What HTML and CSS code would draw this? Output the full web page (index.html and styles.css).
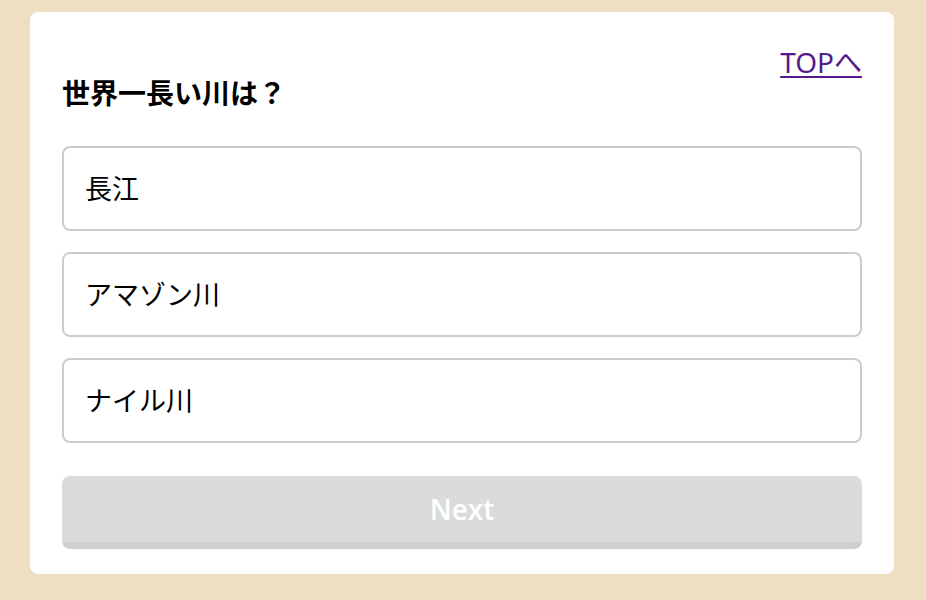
FILE: index.html
```html
<!DOCTYPE html>
<html lang="ja">
<head>
<meta charset="utf-8">
<title>Quiz</title>
<link rel="stylesheet" href="styles.css">
</head>
<body>
<main class="card">
  <div class="header">
    <h1 class="question">世界一長い川は？</h1>
    <a class="top-link" href="#">TOPへ</a>
  </div>
  <div class="options">
    <div class="option">長江</div>
    <div class="option">アマゾン川</div>
    <div class="option">ナイル川</div>
  </div>
  <button class="next" type="button" disabled>Next</button>
</main>
</body>
</html>
```
FILE: styles.css
```css
html, body {
  margin: 0;
  padding: 0;
}
body {
  background: #eedec2;
  font-family: "Noto Sans", "Noto Sans CJK JP", sans-serif;
  height: 600px;
  overflow: hidden;
}
.card {
  box-sizing: border-box;
  width: 864px;
  margin: 12px 0 0 30px;
  background: #fff;
  border-radius: 8px;
  padding: 30px 32px 25px;
}
.header {
  display: flex;
  justify-content: space-between;
  align-items: flex-start;
}
.question {
  margin: 30px 0 0;
  font-family: "Noto Sans CJK JP", sans-serif;
  font-size: 28px;
  font-weight: 700;
  line-height: 40px;
  color: #000;
}
.top-link {
  font-family: "Noto Sans", "Noto Sans CJK JP", sans-serif;
  font-size: 28px;
  line-height: 40px;
  color: #551a8b;
  text-decoration: underline;
  text-underline-offset: 3px;
  text-decoration-thickness: 2px;
}
.options {
  display: flex;
  flex-direction: column;
  gap: 21px;
  margin-top: 34px;
}
.option {
  box-sizing: border-box;
  height: 85px;
  border: 2px solid #cccccc;
  border-radius: 8px;
  padding: 0 21px 2px;
  display: flex;
  align-items: center;
  font-family: "Noto Sans CJK JP", sans-serif;
  font-size: 27px;
  color: #000;
}
.next {
  display: block;
  box-sizing: border-box;
  width: 100%;
  height: 73px;
  margin-top: 33px;
  border: none;
  border-bottom: 7px solid #cfcfcf;
  border-radius: 8px;
  background: #dbdbdb;
  color: #fff;
  font-family: "Open Sans", "Noto Sans", sans-serif;
  font-size: 28px;
  font-weight: 600;
  padding: 0;
}
```
